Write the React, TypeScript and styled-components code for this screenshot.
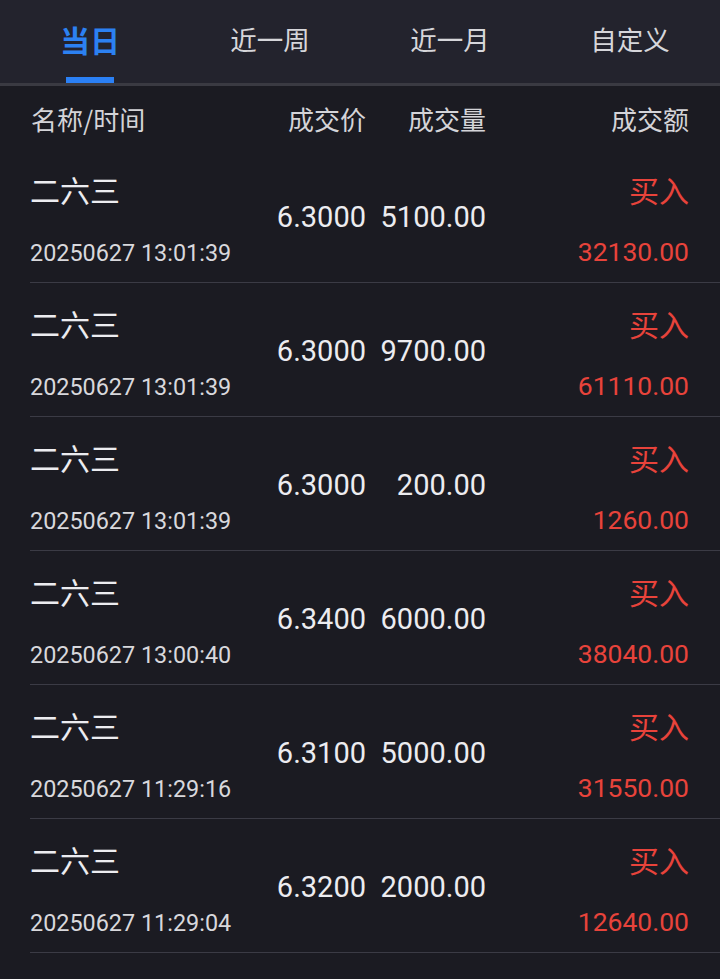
import React from "react";
import styled, { createGlobalStyle } from "styled-components";

const Global = createGlobalStyle`
  html, body { margin: 0; padding: 0; background: #1b1b22; }
  body { font-family: Roboto, "Noto Sans CJK SC", sans-serif; -webkit-font-smoothing: antialiased; }
  * { box-sizing: border-box; }
`;

const Page = styled.div`
  width: 720px;
  min-height: 979px;
  background: #1b1b22;
  color: #e8e8ec;
`;

const TabBar = styled.div`
  display: flex;
  height: 86px;
  background: #23232d;
  border-bottom: 3px solid #3a3a42;
`;

const Tab = styled.div<{ $active?: boolean }>`
  flex: 1;
  display: flex;
  flex-direction: column;
  align-items: center;
  padding-top: 19px;
  font-size: ${(p) => (p.$active ? "30px" : "26.5px")};
  font-weight: ${(p) => (p.$active ? 700 : 400)};
  color: ${(p) => (p.$active ? "#2c81f2" : "#d6d6da")};
`;

const TabLabel = styled.span`
  line-height: 40px;
  height: 40px;
  font-family: "Noto Sans CJK SC", sans-serif;
`;

const Indicator = styled.div<{ $active?: boolean }>`
  margin-top: 18px;
  width: 48px;
  height: 6px;
  background: ${(p) => (p.$active ? "#2b80f5" : "transparent")};
`;

const Grid = styled.div`
  display: grid;
  grid-template-columns: 216px 120px 120px 203px;
  margin-left: 30px;
  padding-right: 31px;
`;

const Header = styled(Grid)`
  height: 63px;
  padding-top: 13px;
  font-family: "Noto Sans CJK SC", sans-serif;
  font-size: 26px;
  line-height: 40px;
  color: #d4d4d8;
`;

const HeadCell = styled.div<{ $right?: boolean }>`
  text-align: ${(p) => (p.$right ? "right" : "left")};
  white-space: nowrap;
  padding-left: 1px;
`;

const Row = styled(Grid)`
  height: 134px;
  border-bottom: 1px solid #3b3b45;
`;

const Stack = styled.div<{ $right?: boolean }>`
  display: flex;
  flex-direction: column;
  align-items: ${(p) => (p.$right ? "flex-end" : "flex-start")};
  padding-top: 20px;
  gap: 23px;
`;

const Name = styled.div`
  font-family: "Noto Sans CJK SC", sans-serif;
  font-size: 30px;
  line-height: 40px;
  color: #ececf0;
`;

const Time = styled.div`
  font-size: 23.4px;
  line-height: 40px;
  color: #d8d8dc;
  white-space: nowrap;
  margin-top: 1px;
`;

const Num = styled.div`
  align-self: center;
  text-align: right;
  font-size: 29px;
  line-height: 40px;
  color: #ececf0;
  padding-top: 3px;
`;

const Side = styled.div`
  font-family: "Noto Sans CJK SC", sans-serif;
  font-size: 30px;
  line-height: 40px;
  color: #e8433b;
`;

const Amount = styled.div`
  font-size: 26.5px;
  line-height: 40px;
  color: #e8433b;
`;

const tabs = ["当日", "近一周", "近一月", "自定义"];

const rows = [
  { price: "6.3000", vol: "5100.00", time: "20250627 13:01:39", amt: "32130.00" },
  { price: "6.3000", vol: "9700.00", time: "20250627 13:01:39", amt: "61110.00" },
  { price: "6.3000", vol: "200.00", time: "20250627 13:01:39", amt: "1260.00" },
  { price: "6.3400", vol: "6000.00", time: "20250627 13:00:40", amt: "38040.00" },
  { price: "6.3100", vol: "5000.00", time: "20250627 11:29:16", amt: "31550.00" },
  { price: "6.3200", vol: "2000.00", time: "20250627 11:29:04", amt: "12640.00" },
];

export default function App() {
  return (
    <Page>
      <Global />
      <TabBar>
        {tabs.map((t, i) => (
          <Tab key={t} $active={i === 0}>
            <TabLabel>{t}</TabLabel>
            <Indicator $active={i === 0} />
          </Tab>
        ))}
      </TabBar>
      <Header>
        <HeadCell>名称/时间</HeadCell>
        <HeadCell $right>成交价</HeadCell>
        <HeadCell $right>成交量</HeadCell>
        <HeadCell $right>成交额</HeadCell>
      </Header>
      {rows.map((r, i) => (
        <Row key={i}>
          <Stack>
            <Name>二六三</Name>
            <Time>{r.time}</Time>
          </Stack>
          <Num>{r.price}</Num>
          <Num>{r.vol}</Num>
          <Stack $right>
            <Side>买入</Side>
            <Amount>{r.amt}</Amount>
          </Stack>
        </Row>
      ))}
    </Page>
  );
}
